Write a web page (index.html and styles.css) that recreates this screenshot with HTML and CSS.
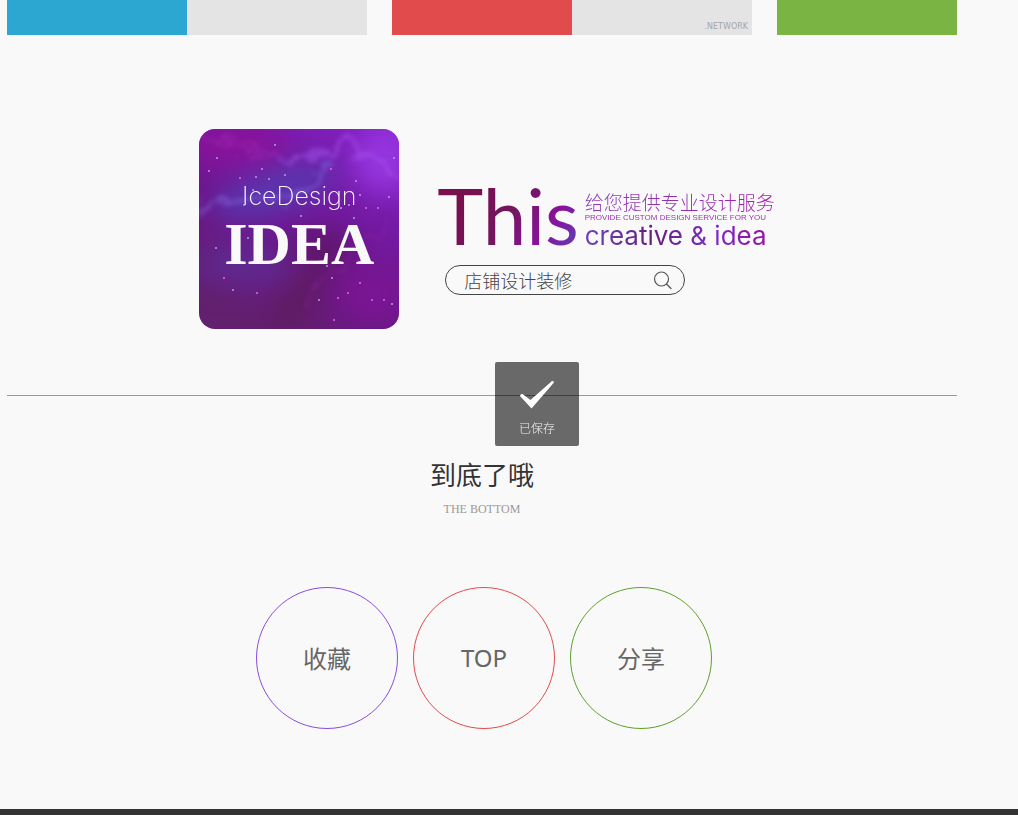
FILE: index.html
```html
<!DOCTYPE html>
<html lang="zh-CN">
<head>
  <meta charset="UTF-8">
  <meta name="viewport" content="width=device-width, initial-scale=1.0">
  <title>IceDesign</title>
  <link rel="stylesheet" href="styles.css">
</head>
<body>
  <main class="page">
    <div class="tiles">
      <div class="tile tile-wide blue"></div>
      <div class="tile tile-wide red"><span class="tile-note">.NETWORK</span></div>
      <div class="tile green"></div>
    </div>

    <section class="brand">
      <div class="logo">
        <svg class="logo-sky" viewBox="0 0 200 200" aria-hidden="true">
          <defs>
            <linearGradient id="sky" x1="0.9" y1="0" x2="0.3" y2="1">
              <stop offset="0" stop-color="#8420c4"/>
              <stop offset="0.35" stop-color="#741aa4"/>
              <stop offset="0.65" stop-color="#6c168a"/>
              <stop offset="1" stop-color="#62206e"/>
            </linearGradient>
            <filter id="soft" x="-50%" y="-50%" width="200%" height="200%" color-interpolation-filters="sRGB">
              <feGaussianBlur stdDeviation="14"/>
            </filter>
            <filter id="wisp" x="-50%" y="-50%" width="200%" height="200%" color-interpolation-filters="sRGB">
              <feTurbulence type="fractalNoise" baseFrequency="0.04" numOctaves="5" seed="4" result="n"/>
              <feDisplacementMap in="SourceGraphic" in2="n" scale="40" xChannelSelector="R" yChannelSelector="G"/>
              <feGaussianBlur stdDeviation="2"/>
            </filter>
          </defs>
          <rect width="200" height="200" fill="url(#sky)"/>
          <g filter="url(#soft)">
            <ellipse cx="35" cy="15" rx="55" ry="20" fill="#8b129a"/>
            <ellipse cx="75" cy="62" rx="65" ry="22" fill="#5a36ad" transform="rotate(-18 75 62)"/>
            <ellipse cx="185" cy="30" rx="30" ry="35" fill="#9636e0"/>
            <ellipse cx="125" cy="118" rx="30" ry="14" fill="#5b1660"/>
            <ellipse cx="100" cy="170" rx="16" ry="42" fill="#5e1c5e" transform="rotate(35 100 170)"/>
            <ellipse cx="45" cy="135" rx="50" ry="20" fill="#5f2a90"/>
            <ellipse cx="175" cy="165" rx="35" ry="30" fill="#7a1692"/>
          </g>
          <g filter="url(#wisp)" fill="none" stroke-linecap="round">
            <path d="M0 80 L40 64 L85 68 L130 38" stroke="#7e66dd" stroke-width="8" opacity="0.45"/>
            <path d="M85 25 L110 35 L145 12 L200 48" stroke="#a652ed" stroke-width="7" opacity="0.5"/>
            <path d="M8 6 L60 28 L90 20" stroke="#b13cbe" stroke-width="2" opacity="0.5"/>
            <path d="M198 90 L165 115 L128 145 L112 185" stroke="#8e24a5" stroke-width="3" opacity="0.5"/>
          </g>
          <g fill="#b99be6">
            <circle cx="76" cy="16" r="1"/><circle cx="18" cy="29" r="1"/><circle cx="10" cy="42" r="1"/>
            <circle cx="63" cy="40" r="1"/><circle cx="57" cy="48" r="1"/><circle cx="86" cy="46" r="1"/>
            <circle cx="70" cy="50" r="1"/><circle cx="54" cy="61" r="1"/><circle cx="45" cy="76" r="1"/>
            <circle cx="102" cy="87" r="1"/><circle cx="142" cy="79" r="1"/><circle cx="150" cy="76" r="1"/>
            <circle cx="157" cy="52" r="1"/><circle cx="161" cy="66" r="1"/><circle cx="190" cy="68" r="1"/>
            <circle cx="195" cy="29" r="1"/><circle cx="155" cy="89" r="1"/><circle cx="17" cy="119" r="1"/>
            <circle cx="49" cy="109" r="1"/><circle cx="128" cy="137" r="1"/><circle cx="133" cy="149" r="1"/>
            <circle cx="120" cy="171" r="1"/><circle cx="193" cy="175" r="1"/><circle cx="34" cy="161" r="1"/>
          </g>
          <g fill="#ef62e8">
            <circle cx="167" cy="79" r="1"/><circle cx="179" cy="79" r="1"/><circle cx="25" cy="149" r="1"/>
            <circle cx="58" cy="164" r="1"/><circle cx="139" cy="169" r="1"/><circle cx="149" cy="164" r="1"/>
            <circle cx="173" cy="171" r="1"/><circle cx="135" cy="191" r="1"/><circle cx="161" cy="154" r="1"/>
            <circle cx="185" cy="171" r="1"/><circle cx="132" cy="40" r="1"/><circle cx="41" cy="49" r="1"/>
          </g>
        </svg>
        <div class="logo-text">
          <span class="logo-name">IceDesign</span>
          <strong class="logo-idea">IDEA</strong>
        </div>
      </div>

      <div class="brand-info">
        <div class="slogan">
          <h1 class="slogan-this">This</h1>
          <div class="slogan-lines">
            <p class="slogan-cn">给您提供专业设计服务</p>
            <p class="slogan-en">PROVIDE CUSTOM DESIGN SERVICE FOR YOU</p>
            <p class="slogan-idea">creative &amp; idea</p>
          </div>
        </div>
        <form class="search">
          <input class="search-input" type="text" value="店铺设计装修" aria-label="搜索">
          <button class="search-btn" type="button" aria-label="搜索">
            <svg width="20" height="20" viewBox="0 0 20 20" fill="none" stroke="#555" stroke-width="1.2" stroke-linecap="round">
              <circle cx="8.5" cy="9" r="7"/>
              <path d="M13.5 14 18 18.500"/>
            </svg>
          </button>
        </form>
      </div>
    </section>

    <hr class="divider">

    <section class="bottom">
      <h2>到底了哦</h2>
      <p>THE BOTTOM</p>
    </section>

    <nav class="actions">
      <a class="action purple" href="#">收藏</a>
      <a class="action top" href="#">TOP</a>
      <a class="action share" href="#">分享</a>
    </nav>
  </main>

  <footer class="footer"></footer>

  <div class="toast" role="status">
    <svg width="36" height="30" viewBox="0 0 36 30" fill="#fff" aria-hidden="true">
      <path d="M1 16 Q1.500 13.500 3.500 14 L11.500 20 L33 1 Q35 0.500 35 2.500 L12.500 28.500 Z"/>
    </svg>
    <span>已保存</span>
  </div>
</body>
</html>
```
FILE: styles.css
```css
* {
  margin: 0;
  padding: 0;
  box-sizing: border-box;
}

body {
  background: #f9f9f9;
  color: #333;
  font-family: "Noto Sans", "Noto Sans CJK SC", sans-serif;
}

.page {
  padding: 0 61px 80px 7px;
}

/* colour tiles */
.tiles {
  display: flex;
  gap: 25px;
}

.tile {
  flex: 1;
  height: 35px;
}

.tile-wide {
  flex: 2;
  display: flex;
  justify-content: flex-end;
  align-items: flex-end;
}

.blue {
  background: linear-gradient(90deg, #2ba7d2 50%, #e4e4e4 50%);
}

.red {
  background: linear-gradient(90deg, #e24b4b 50%, #e4e4e4 50%);
}

.green {
  background: #7ab543;
}

.tile-note {
  padding: 0 4px 4px 0;
  color: #a5a5a5;
  font-family: "DejaVu Sans", sans-serif;
  font-size: 8px;
  line-height: 9px;
}

/* logo and slogan */
.brand {
  display: flex;
  justify-content: center;
  gap: 38px;
  padding: 94px 0 66px 10px;
}

.logo {
  display: grid;
  width: 200px;
  height: 200px;
  border-radius: 16px;
  overflow: hidden;
  color: #f9f9f9;
}

.logo-sky,
.logo-text {
  grid-area: 1 / 1;
}

.logo-text {
  z-index: 1;
  display: flex;
  flex-direction: column;
  align-items: center;
  padding-top: 50px;
}

.logo-name {
  font-family: Inter, sans-serif;
  font-size: 25px;
  font-weight: 200;
  line-height: 34px;
}

.logo-idea {
  font-family: "Liberation Serif", serif;
  font-size: 60px;
  line-height: 62px;
}

.brand-info {
  padding-top: 44px;
}

.slogan {
  display: flex;
  gap: 6px;
  height: 92px;
}

.slogan-this,
.slogan-idea,
.slogan-cn,
.slogan-en {
  white-space: nowrap;
  color: transparent;
  -webkit-background-clip: text;
  background-clip: text;
}

.slogan-this {
  background-image: linear-gradient(125deg, #781050 25%, #731660 50%, #8a119c 72%, #6438b0 90%);
  font-family: Lato, sans-serif;
  font-size: 78px;
  font-weight: 400;
  line-height: 84px;
}

.slogan-lines {
  padding-top: 18px;
}

.slogan-cn {
  background-image: linear-gradient(90deg, #8a3bb8, #a31fae);
  font-family: "Noto Sans CJK SC", sans-serif;
  font-size: 19px;
  font-weight: 300;
  line-height: 22px;
}

.slogan-en {
  background-image: linear-gradient(90deg, #9a2bb0, #9a2bb0);
  font-family: "Liberation Sans", sans-serif;
  font-size: 8px;
  line-height: 10px;
}

.slogan-idea {
  background-image: linear-gradient(90deg, #7040c0, #632079 35%, #7b2cc4 65%, #960fa0);
  font-family: Inter, sans-serif;
  font-size: 26px;
  line-height: 26px;
}

.search {
  display: flex;
  align-items: center;
  width: 240px;
  height: 30px;
  margin-left: 8px;
  padding: 0 11px 0 18px;
  border: 1px solid #444;
  border-radius: 15px;
}

.search-input {
  flex: 1;
  min-width: 0;
  border: 0;
  background: none;
  color: #444;
  font-family: "Noto Sans CJK SC", sans-serif;
  font-size: 18px;
  font-weight: 300;
  line-height: 28px;
  outline: none;
}

.search-btn {
  display: flex;
  border: 0;
  background: none;
  cursor: pointer;
}

/* end of page */
.divider {
  border: 0;
  border-top: 1px solid #999;
}

.bottom {
  padding-top: 59px;
  text-align: center;
}

.bottom h2 {
  font-size: 26px;
  font-weight: 400;
  line-height: 40px;
}

.bottom p {
  color: #999;
  font-family: "Liberation Serif", serif;
  font-size: 12px;
  line-height: 28px;
}

.actions {
  display: flex;
  justify-content: center;
  gap: 15px;
  padding: 64px 0 0 4px;
}

.action {
  display: flex;
  justify-content: center;
  align-items: center;
  width: 142px;
  height: 142px;
  padding-bottom: 2px;
  border: 1px solid;
  border-radius: 50%;
  font-size: 24px;
  text-decoration: none;
  color: #666;
}

.purple {
  border-color: #8a4be0;
}

.top {
  border-color: #e24b4b;
}

.share {
  border-color: #5fa02c;
}

.footer {
  height: 6px;
  background: #333;
}

.toast {
  position: fixed;
  top: 362px;
  left: calc(50% - 14px);
  display: flex;
  flex-direction: column;
  align-items: center;
  gap: 8px;
  width: 84px;
  height: 84px;
  padding-top: 18px;
  border-radius: 2px;
  background: rgba(0, 0, 0, 0.58);
  color: #eee;
  font-family: "Noto Sans CJK SC", sans-serif;
  font-size: 12px;
  font-weight: 300;
  line-height: 20px;
}
```
